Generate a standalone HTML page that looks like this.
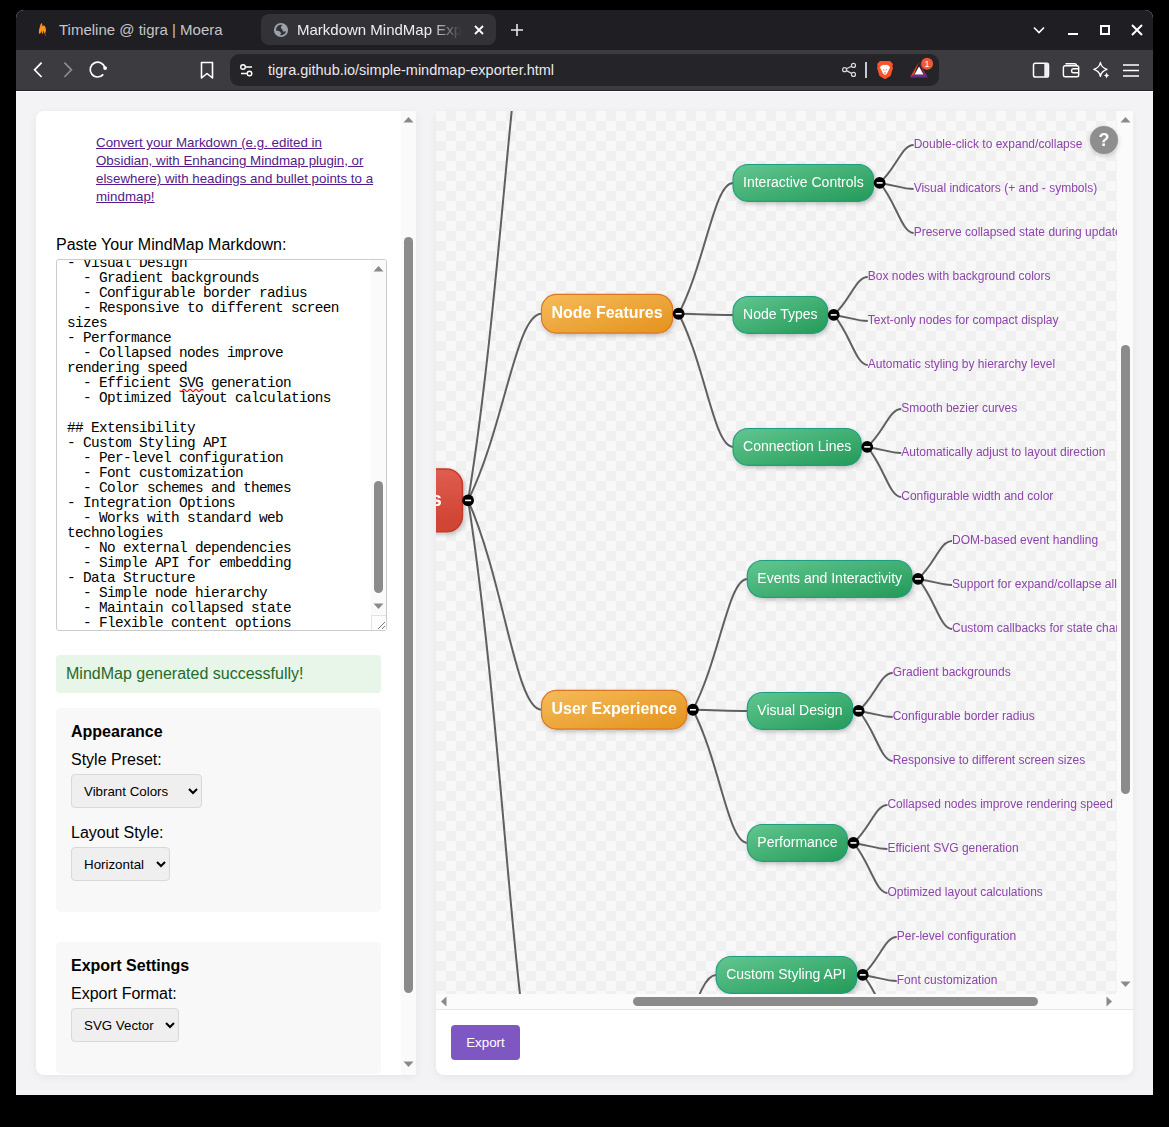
<!DOCTYPE html>
<html><head><meta charset="utf-8">
<style>
*{box-sizing:border-box;margin:0;padding:0}
html,body{width:1169px;height:1127px;overflow:hidden;background:#000;font-family:"Liberation Sans",sans-serif}
.a{position:absolute}
#win{position:absolute;left:16px;top:10px;width:1137px;height:1085px;background:#f3f3f5;border-radius:8px 8px 0 0;overflow:hidden}
#tabs{position:absolute;left:0;top:0;width:1137px;height:40px;background:#1f1e23}
#tool{position:absolute;left:0;top:40px;width:1137px;height:41px;background:#3c3b40;border-bottom:1px solid #252429}
#content{position:absolute;left:0;top:81px;width:1137px;height:1004px;background:#f3f3f5;border-top:1px solid #fff}
.sel{background:#efefef;border:1px solid #d9d9d9;border-radius:4px}
.sel span{position:absolute;left:12px;top:8px;font-size:13.33px;line-height:18px;color:#000}
.chev{position:absolute;top:13px}
.tabt{position:absolute;font-size:15px;white-space:nowrap;line-height:18px}
</style></head><body>
<div id="win">
  <div id="tabs">
    <!-- inactive tab favicon -->
    <svg class="a" style="left:21px;top:11px" width="12" height="16" viewBox="21 11 12 16">
      <path d="M22.9 23.2 C22.6 20.5 23.6 17.5 24.6 14.6 C24.9 13.4 25.6 12.8 26.1 13.5 C26.4 14.6 26.3 15.8 26.6 16.6 C27 15.6 27.6 15.1 28.3 15.6 C29.4 16.6 30.1 18.6 30 20.6 C29.8 22 29.3 23.4 28.8 24.2 C28.2 22.8 27.9 21.5 27.5 20.4 C27.2 21.8 27.1 23.2 26.6 24 C26 23.6 25.7 22.2 25.6 20.6 C25.2 21.8 24.8 23 24.2 23.6 C23.6 23.9 23.1 23.8 22.9 23.2 Z" fill="#f7931e"/>
      <circle cx="29.4" cy="25" r="0.7" fill="#8a5a2a"/>
    </svg>
    <div class="tabt" style="left:43px;top:11px;color:#c5c4c9">Timeline @ tigra | Moera</div>
    <!-- active tab -->
    <div class="a" style="left:245px;top:4px;width:235px;height:31px;background:#333237;border-radius:8px"></div>
    <svg class="a" style="left:257px;top:12px" width="16" height="16" viewBox="-8 -8 16 16">
      <circle cx="0" cy="0" r="7.1" fill="#9da1aa"/>
      <path d="M-5 0.6 A5.3 5.3 0 0 1 1.4 -5.1 C-0.2 -3.8 -0.6 -2.2 0.6 -1.2 C1.6 -0.3 2 0.6 1.6 1.2 C2.8 1.6 3.8 1.6 5.1 1.4 A5.3 5.3 0 0 1 -1.2 5.2 C0 4 0.3 3 -0.4 2.2 C-1.4 1.3 -3 0.8 -5 0.6 Z" fill="#333237"/>
    </svg>
    <div class="tabt" style="left:281px;top:11px;color:#eeedf2;width:165px;overflow:hidden;-webkit-mask-image:linear-gradient(90deg,#000 80%,transparent 100%)">Markdown MindMap Exporter</div>
    <svg class="a" style="left:457px;top:14px" width="12" height="12" viewBox="0 0 12 12"><path d="M2 2 L10 10 M10 2 L2 10" stroke="#fff" stroke-width="1.8"/></svg>
    <svg class="a" style="left:494px;top:13px" width="14" height="14" viewBox="0 0 14 14"><path d="M7 1 V13 M1 7 H13" stroke="#e8e7ec" stroke-width="1.6"/></svg>
    <!-- window controls -->
    <svg class="a" style="left:1017px;top:16px" width="12" height="8" viewBox="0 0 12 8"><path d="M1 1.5 L6 6.5 L11 1.5" stroke="#fff" stroke-width="1.6" fill="none"/></svg>
    <div class="a" style="left:1052px;top:22.5px;width:10px;height:2px;background:#fff"></div>
    <div class="a" style="left:1084px;top:15px;width:10px;height:10px;border:2px solid #fff"></div>
    <svg class="a" style="left:1115px;top:14px" width="12" height="12" viewBox="0 0 12 12"><path d="M1 1 L11 11 M11 1 L1 11" stroke="#fff" stroke-width="2"/></svg>
  </div>
  <div id="tool">
    <!-- back / fwd / reload -->
    <svg class="a" style="left:14px;top:10px" width="100" height="22" viewBox="30 60 100 22">
      <path d="M41.6 62.6 L34.6 69.8 L41.6 77" stroke="#fff" stroke-width="1.7" fill="none"/>
      <path d="M64.4 62.6 L71.4 69.8 L64.4 77" stroke="#8d8c91" stroke-width="1.7" fill="none"/>
      <path d="M104.84 68.06 A7.4 7.4 0 1 0 103.27 74.36" stroke="#fff" stroke-width="1.7" fill="none"/>
      <circle cx="105.14" cy="68.06" r="1.9" fill="#fff"/>
    </svg>
    <svg class="a" style="left:183px;top:11px" width="16" height="19" viewBox="0 0 16 19"><path d="M2.5 1.5 H13.5 V17 L8 12.5 L2.5 17 Z" stroke="#fff" stroke-width="1.6" fill="none" stroke-linejoin="round"/></svg>
    <!-- url bar -->
    <div class="a" style="left:214px;top:4px;width:709px;height:32px;background:#252429;border-radius:9px"></div>
    <svg class="a" style="left:223px;top:13px" width="16" height="15" viewBox="0 0 16 15">
      <circle cx="4" cy="4" r="2.3" stroke="#fff" stroke-width="1.4" fill="none"/><path d="M6.8 4 H13" stroke="#fff" stroke-width="1.4"/>
      <circle cx="10.5" cy="10.5" r="2.3" stroke="#fff" stroke-width="1.4" fill="none"/><path d="M2 10.5 H7.8" stroke="#fff" stroke-width="1.4"/>
    </svg>
    <div class="tabt" style="left:252px;top:11px;font-size:14.5px;color:#e9e8ed">tigra.github.io/simple-mindmap-exporter.html</div>
  </div>
  <div id="content"></div>
</div>


<!-- url bar right icons -->
<svg class="a" style="left:840px;top:61px" width="18" height="18" viewBox="840 61 18 18">
  <path d="M846.5 68.8 L851.6 66.2 M846.5 70.6 L851.6 73.4" stroke="#d8d7dc" stroke-width="1.2"/>
  <circle cx="844.6" cy="69.7" r="2" fill="none" stroke="#d8d7dc" stroke-width="1.2"/>
  <circle cx="853.5" cy="65.4" r="2" fill="none" stroke="#d8d7dc" stroke-width="1.2"/>
  <circle cx="853.5" cy="74.4" r="2" fill="none" stroke="#d8d7dc" stroke-width="1.2"/>
</svg>
<div class="a" style="left:865px;top:62px;width:1.5px;height:16px;background:#c9c8cd"></div>
<svg class="a" style="left:876px;top:60px" width="18" height="20" viewBox="876 60 18 20">
  <path d="M880 61 L890 61 L893 64 L892.3 66 L893 68 L890.5 76 L885 79.2 L879.5 76 L877 68 L877.7 66 L877 64 Z" fill="#fb542b"/>
  <path d="M881.5 65.5 L883.8 64.8 L885 65.3 L886.2 64.8 L888.5 65.5 L890 67 L889.2 69.3 L888 71.5 L886.8 73.8 L885 75 L883.2 73.8 L882 71.5 L880.8 69.3 L880 67 Z" fill="#fff"/>
  <path d="M883 69.5 L884.3 70.2 M887 69.5 L885.7 70.2 M884 73.3 L885 72.6 L886 73.3" stroke="#fb542b" stroke-width="0.9" fill="none"/>
</svg>
<svg class="a" style="left:908px;top:56px" width="28" height="24" viewBox="908 56 28 24">
  <path d="M919 62 L910 77.4 L914 74.5 Z" fill="#ff4724"/>
  <path d="M919 62 L928 77.4 L924 74.5 Z" fill="#9e1f63"/>
  <path d="M910 77.4 L928 77.4 L924 74.5 L914 74.5 Z" fill="#662d91"/>
  <path d="M919 66.5 L914.5 74.5 L923.5 74.5 Z" fill="#fff"/>
  <path d="M919 62 L914 74.5 L924 74.5 Z" fill="none"/>
  <circle cx="927.1" cy="63.7" r="6" fill="#f0582e"/>
  <text x="927.1" y="67" text-anchor="middle" font-size="9" fill="#fff" font-family="Liberation Sans">1</text>
</svg>
<!-- toolbar right icons -->
<svg class="a" style="left:1030px;top:60px" width="116" height="20" viewBox="1030 60 116 20">
  <rect x="1033.5" y="63.2" width="15" height="13.8" rx="1.8" fill="none" stroke="#fff" stroke-width="1.5"/>
  <rect x="1044.3" y="63.2" width="4.2" height="13.8" fill="#f0f0f3"/>
  <path d="M1065.5 63.7 H1074.5 Q1076.5 63.7 1076.5 65.7 V66.3" fill="none" stroke="#fff" stroke-width="1.4"/>
  <rect x="1063.4" y="65.8" width="15.3" height="11" rx="1.8" fill="none" stroke="#fff" stroke-width="1.4"/>
  <path d="M1078.7 68.8 H1073.3 Q1071.6 68.8 1071.6 70.6 V71 Q1071.6 72.8 1073.3 72.8 H1078.7" fill="none" stroke="#fff" stroke-width="1.4"/>
  <path d="M1100.4 62.5 Q1101.3 67.6 1107 69.3 Q1101.3 71 1100.4 76.3 Q1099.5 71 1093.8 69.3 Q1099.5 67.6 1100.4 62.5 Z" fill="none" stroke="#fff" stroke-width="1.4" stroke-linejoin="round"/>
  <path d="M1106.6 72.6 Q1107 75 1109.2 75.5 Q1107 76 1106.6 78.4 Q1106.2 76 1104 75.5 Q1106.2 75 1106.6 72.6 Z" fill="#fff"/>
  <path d="M1123 65 H1139 M1123 70.4 H1139 M1123 76 H1139" stroke="#fff" stroke-width="1.5"/>
</svg>
<!-- LEFT PANEL -->
<div class="a" style="left:36px;top:111px;width:380px;height:964px;background:#fff;border-radius:8px 0 0 8px;box-shadow:0 2px 8px rgba(0,0,0,0.06);overflow:hidden">
</div>
<div class="a" style="left:401px;top:111px;width:15px;height:964px;background:#fafafa"></div>
<svg class="a" style="left:403px;top:116px" width="11" height="7" viewBox="0 0 11 7"><path d="M0.5 6.5 L5.5 1 L10.5 6.5Z" fill="#8a8a8a"/></svg>
<svg class="a" style="left:403px;top:1061px" width="11" height="7" viewBox="0 0 11 7"><path d="M0.5 0.5 L5.5 6 L10.5 0.5Z" fill="#8a8a8a"/></svg>
<div class="a" style="left:404px;top:237px;width:9px;height:756px;background:#8b8b8b;border-radius:5px"></div>

<div class="a" style="left:96px;top:134px;width:300px;font-size:13.33px;line-height:18px;color:#551a8b;text-decoration:underline">Convert your Markdown (e.g. edited in<br>Obsidian, with Enhancing Mindmap plugin, or<br>elsewhere) with headings and bullet points to a<br>mindmap!</div>
<div class="a" style="left:56px;top:236px;font-size:16px;line-height:18px;color:#000">Paste Your MindMap Markdown:</div>

<!-- textarea -->
<div class="a" style="left:56px;top:259px;width:331px;height:372px;border:1px solid #cbcbcb;border-radius:3px;background:#fff;overflow:hidden"><div class="a" style="left:314px;top:0;width:15px;height:370px;background:#fafafa"></div>
<pre class="a" style="left:10px;top:-4px;font-family:'Liberation Mono',monospace;font-size:14.4px;letter-spacing:-0.64px;line-height:15px;color:#000">- Visual Design
  - Gradient backgrounds
  - Configurable border radius
  - Responsive to different screen
sizes
- Performance
  - Collapsed nodes improve
rendering speed
  - Efficient SVG generation
  - Optimized layout calculations

## Extensibility
- Custom Styling API
  - Per-level configuration
  - Font customization
  - Color schemes and themes
- Integration Options
  - Works with standard web
technologies
  - No external dependencies
  - Simple API for embedding
- Data Structure
  - Simple node hierarchy
  - Maintain collapsed state
  - Flexible content options</pre>
</div>
<svg class="a" style="left:0;top:0" width="1169" height="1127" viewBox="0 0 1169 1127"><path d="M179.5 390.5 Q181.0 392.6 182.5 390.5 Q184.0 388.4 185.5 390.5 Q187.0 392.6 188.5 390.5 Q190.0 388.4 191.5 390.5 Q193.0 392.6 194.5 390.5 Q196.0 388.4 197.5 390.5 Q199.0 392.6 200.5 390.5 Q202.0 388.4 203.5 390.5" stroke="#f00" stroke-width="1.2" fill="none"/></svg>
<svg class="a" style="left:373px;top:265px" width="11" height="7" viewBox="0 0 11 7"><path d="M0.5 6.5 L5.5 1 L10.5 6.5Z" fill="#8a8a8a"/></svg>
<svg class="a" style="left:373px;top:603px" width="11" height="7" viewBox="0 0 11 7"><path d="M0.5 0.5 L5.5 6 L10.5 0.5Z" fill="#8a8a8a"/></svg>
<div class="a" style="left:374px;top:481px;width:9px;height:112px;background:#8b8b8b;border-radius:5px"></div>
<div class="a" style="left:371px;top:615px;width:15px;height:15px;border-left:1px solid #e2e2e2;border-top:1px solid #e2e2e2;background:#fdfdfd"></div><svg class="a" style="left:376px;top:620px" width="10" height="10" viewBox="0 0 10 10"><path d="M9 2 L2 9 M9 6 L6 9" stroke="#777" stroke-width="1"/></svg>

<!-- success -->
<div class="a" style="left:56px;top:655px;width:325px;height:38px;background:#e8f5e9;border-radius:4px"></div>
<div class="a" style="left:66px;top:665px;font-size:16px;line-height:18px;color:#256b29">MindMap generated successfully!</div>

<!-- appearance -->
<div class="a" style="left:56px;top:708px;width:325px;height:204px;background:#f8f8f8;border-radius:5px"></div>
<div class="a" style="left:71px;top:723px;font-size:16px;line-height:18px;font-weight:bold;color:#000">Appearance</div>
<div class="a" style="left:71px;top:751px;font-size:16px;line-height:18px;color:#000">Style Preset:</div>
<div class="a sel" style="left:71px;top:774px;width:131px;height:34px"><span>Vibrant Colors</span><svg class="chev" style="left:116px" width="10" height="7" viewBox="0 0 10 7"><path d="M1 1 L5 5 L9 1" stroke="#000" stroke-width="2" fill="none"/></svg></div>
<div class="a" style="left:71px;top:824px;font-size:16px;line-height:18px;color:#000">Layout Style:</div>
<div class="a sel" style="left:71px;top:847px;width:99px;height:34px"><span>Horizontal</span><svg class="chev" style="left:84px" width="10" height="7" viewBox="0 0 10 7"><path d="M1 1 L5 5 L9 1" stroke="#000" stroke-width="2" fill="none"/></svg></div>

<!-- export settings -->
<div class="a" style="left:56px;top:942px;width:325px;height:132px;background:#f8f8f8;border-radius:5px"></div>
<div class="a" style="left:71px;top:957px;font-size:16px;line-height:18px;font-weight:bold;color:#000">Export Settings</div>
<div class="a" style="left:71px;top:985px;font-size:16px;line-height:18px;color:#000">Export Format:</div>
<div class="a sel" style="left:71px;top:1008px;width:108px;height:34px"><span>SVG Vector</span><svg class="chev" style="left:93px" width="10" height="7" viewBox="0 0 10 7"><path d="M1 1 L5 5 L9 1" stroke="#000" stroke-width="2" fill="none"/></svg></div>

<!-- RIGHT PANEL -->
<div class="a" style="left:436px;top:111px;width:697px;height:964px;background:#fff;border-radius:8px;box-shadow:0 2px 8px rgba(0,0,0,0.06)"></div>
<!--MAP--><svg class="a" style="left:436px;top:111px;will-change:transform" width="681" height="883" viewBox="436 111 681 883">
<defs>
<linearGradient id="gr" x1="0" y1="0" x2="0.3" y2="1"><stop offset="0" stop-color="#e4665a"/><stop offset="1" stop-color="#d14535"/></linearGradient>
<linearGradient id="go" x1="0" y1="0" x2="1" y2="1"><stop offset="0" stop-color="#f6bb5a"/><stop offset="1" stop-color="#e3931d"/></linearGradient>
<linearGradient id="gg" x1="0" y1="0" x2="1" y2="1"><stop offset="0" stop-color="#62c690"/><stop offset="1" stop-color="#239a58"/></linearGradient>
<filter id="sh" x="-20%" y="-30%" width="140%" height="170%"><feDropShadow dx="1.5" dy="2" stdDeviation="2" flood-color="#000" flood-opacity="0.22"/></filter>
<pattern id="chk" x="436" y="111" width="20" height="20" patternUnits="userSpaceOnUse"><rect width="20" height="20" fill="#f8f8f8"/><rect x="10" width="10" height="10" fill="#f0f0f0"/><rect y="10" width="10" height="10" fill="#f0f0f0"/></pattern>
</defs>
<rect x="436" y="111" width="681" height="883" fill="url(#chk)"/>
<g fill="none" stroke="#606060" stroke-width="2"><path d="M468.10 500.40C504.80 277.84 515.81 -56.00 541.50 -56.00"/><path d="M468.10 500.40C504.80 425.74 515.81 313.75 541.50 313.75"/><path d="M678.64 313.75C705.84 261.41 714.00 182.90 733.04 182.90"/><path d="M879.65 182.90C896.65 167.70 901.75 144.90 913.65 144.90"/><path d="M879.65 182.90C896.65 185.30 901.75 188.90 913.65 188.90"/><path d="M879.65 182.90C896.65 202.90 901.75 232.90 913.65 232.90"/><path d="M678.64 313.75C705.84 314.21 714.00 314.90 733.04 314.90"/><path d="M833.75 314.90C850.75 299.70 855.85 276.90 867.75 276.90"/><path d="M833.75 314.90C850.75 317.30 855.85 320.90 867.75 320.90"/><path d="M833.75 314.90C850.75 334.90 855.85 364.90 867.75 364.90"/><path d="M678.64 313.75C705.84 367.01 714.00 446.90 733.04 446.90"/><path d="M867.23 446.90C884.23 431.70 889.33 408.90 901.23 408.90"/><path d="M867.23 446.90C884.23 449.30 889.33 452.90 901.23 452.90"/><path d="M867.23 446.90C884.23 466.90 889.33 496.90 901.23 496.90"/><path d="M468.10 500.40C504.80 584.14 515.81 709.75 541.50 709.75"/><path d="M692.91 709.75C720.11 657.41 728.27 578.90 747.31 578.90"/><path d="M918.04 578.90C935.04 563.70 940.14 540.90 952.04 540.90"/><path d="M918.04 578.90C935.04 581.30 940.14 584.90 952.04 584.90"/><path d="M918.04 578.90C935.04 598.90 940.14 628.90 952.04 628.90"/><path d="M692.91 709.75C720.11 710.21 728.27 710.90 747.31 710.90"/><path d="M858.65 710.90C875.65 695.70 880.75 672.90 892.65 672.90"/><path d="M858.65 710.90C875.65 713.30 880.75 716.90 892.65 716.90"/><path d="M858.65 710.90C875.65 730.90 880.75 760.90 892.65 760.90"/><path d="M692.91 709.75C720.11 763.01 728.27 842.90 747.31 842.90"/><path d="M853.45 842.90C870.45 827.70 875.55 804.90 887.45 804.90"/><path d="M853.45 842.90C870.45 845.30 875.55 848.90 887.45 848.90"/><path d="M853.45 842.90C870.45 862.90 875.55 892.90 887.45 892.90"/><path d="M468.10 500.40C504.80 735.44 515.81 1088.00 541.50 1088.00"/><path d="M661.75 1088.00C688.95 1042.76 697.11 974.90 716.15 974.90"/><path d="M862.75 974.90C879.75 959.70 884.85 936.90 896.75 936.90"/><path d="M862.75 974.90C879.75 977.30 884.85 980.90 896.75 980.90"/><path d="M862.75 974.90C879.75 994.90 884.85 1024.90 896.75 1024.90"/></g>
<rect x="200" y="469.00" width="262.50" height="62.8" rx="16" fill="url(#gr)" stroke="#c23a2c" stroke-width="1.5" filter="url(#sh)"/>
<text x="442" y="505.60" text-anchor="end" font-size="20" font-weight="bold" fill="#fff">Simple MindMap Features</text>
<rect x="541.50" y="294.45" width="131.14" height="38.6" rx="15" fill="url(#go)" stroke="#dc7420" stroke-width="1.2" filter="url(#sh)"/>
<text x="551.50" y="317.90" font-size="16" font-weight="bold" fill="#fff">Node Features</text>
<rect x="733.04" y="164.50" width="140.61" height="36.8" rx="15" fill="url(#gg)" stroke="#1f9f80" stroke-width="1.2" filter="url(#sh)"/>
<text x="743.04" y="186.53" font-size="14" fill="#fff">Interactive Controls</text>
<rect x="733.04" y="296.50" width="94.71" height="36.8" rx="15" fill="url(#gg)" stroke="#1f9f80" stroke-width="1.2" filter="url(#sh)"/>
<text x="743.04" y="318.53" font-size="14" fill="#fff">Node Types</text>
<rect x="733.04" y="428.50" width="128.19" height="36.8" rx="15" fill="url(#gg)" stroke="#1f9f80" stroke-width="1.2" filter="url(#sh)"/>
<text x="743.04" y="450.53" font-size="14" fill="#fff">Connection Lines</text>
<rect x="541.50" y="690.45" width="145.41" height="38.6" rx="15" fill="url(#go)" stroke="#dc7420" stroke-width="1.2" filter="url(#sh)"/>
<text x="551.50" y="713.90" font-size="16" font-weight="bold" fill="#fff">User Experience</text>
<rect x="747.31" y="560.50" width="164.74" height="36.8" rx="15" fill="url(#gg)" stroke="#1f9f80" stroke-width="1.2" filter="url(#sh)"/>
<text x="757.31" y="582.53" font-size="14" fill="#fff">Events and Interactivity</text>
<rect x="747.31" y="692.50" width="105.35" height="36.8" rx="15" fill="url(#gg)" stroke="#1f9f80" stroke-width="1.2" filter="url(#sh)"/>
<text x="757.31" y="714.53" font-size="14" fill="#fff">Visual Design</text>
<rect x="747.31" y="824.50" width="100.14" height="36.8" rx="15" fill="url(#gg)" stroke="#1f9f80" stroke-width="1.2" filter="url(#sh)"/>
<text x="757.31" y="846.53" font-size="14" fill="#fff">Performance</text>
<rect x="541.50" y="1068.70" width="114.25" height="38.6" rx="15" fill="url(#go)" stroke="#dc7420" stroke-width="1.2" filter="url(#sh)"/>
<text x="551.50" y="1092.15" font-size="16" font-weight="bold" fill="#fff">Extensibility</text>
<rect x="716.15" y="956.50" width="140.60" height="36.8" rx="15" fill="url(#gg)" stroke="#1f9f80" stroke-width="1.2" filter="url(#sh)"/>
<text x="726.15" y="978.53" font-size="14" fill="#fff">Custom Styling API</text>
<text x="913.65" y="148.00" font-size="12" fill="#8e44ad">Double-click to expand/collapse</text>
<text x="913.65" y="192.00" font-size="12" fill="#8e44ad">Visual indicators (+ and - symbols)</text>
<text x="913.65" y="236.00" font-size="12" fill="#8e44ad">Preserve collapsed state during updates</text>
<text x="867.75" y="280.00" font-size="12" fill="#8e44ad">Box nodes with background colors</text>
<text x="867.75" y="324.00" font-size="12" fill="#8e44ad">Text-only nodes for compact display</text>
<text x="867.75" y="368.00" font-size="12" fill="#8e44ad">Automatic styling by hierarchy level</text>
<text x="901.23" y="412.00" font-size="12" fill="#8e44ad">Smooth bezier curves</text>
<text x="901.23" y="456.00" font-size="12" fill="#8e44ad">Automatically adjust to layout direction</text>
<text x="901.23" y="500.00" font-size="12" fill="#8e44ad">Configurable width and color</text>
<text x="952.04" y="544.00" font-size="12" fill="#8e44ad">DOM-based event handling</text>
<text x="952.04" y="588.00" font-size="12" fill="#8e44ad">Support for expand/collapse all</text>
<text x="952.04" y="632.00" font-size="12" fill="#8e44ad">Custom callbacks for state changes</text>
<text x="892.65" y="676.00" font-size="12" fill="#8e44ad">Gradient backgrounds</text>
<text x="892.65" y="720.00" font-size="12" fill="#8e44ad">Configurable border radius</text>
<text x="892.65" y="764.00" font-size="12" fill="#8e44ad">Responsive to different screen sizes</text>
<text x="887.45" y="808.00" font-size="12" fill="#8e44ad">Collapsed nodes improve rendering speed</text>
<text x="887.45" y="852.00" font-size="12" fill="#8e44ad">Efficient SVG generation</text>
<text x="887.45" y="896.00" font-size="12" fill="#8e44ad">Optimized layout calculations</text>
<text x="896.75" y="940.00" font-size="12" fill="#8e44ad">Per-level configuration</text>
<text x="896.75" y="984.00" font-size="12" fill="#8e44ad">Font customization</text>
<text x="896.75" y="1028.00" font-size="12" fill="#8e44ad">Color schemes and themes</text>
<circle cx="468.10" cy="500.40" r="5.9" fill="#000"/><rect x="465.10" y="499.60" width="6" height="1.6" fill="#fff"/>
<circle cx="678.64" cy="313.75" r="5.9" fill="#000"/><rect x="675.64" y="312.95" width="6" height="1.6" fill="#fff"/>
<circle cx="879.65" cy="182.90" r="5.9" fill="#000"/><rect x="876.65" y="182.10" width="6" height="1.6" fill="#fff"/>
<circle cx="833.75" cy="314.90" r="5.9" fill="#000"/><rect x="830.75" y="314.10" width="6" height="1.6" fill="#fff"/>
<circle cx="867.23" cy="446.90" r="5.9" fill="#000"/><rect x="864.23" y="446.10" width="6" height="1.6" fill="#fff"/>
<circle cx="692.91" cy="709.75" r="5.9" fill="#000"/><rect x="689.91" y="708.95" width="6" height="1.6" fill="#fff"/>
<circle cx="918.04" cy="578.90" r="5.9" fill="#000"/><rect x="915.04" y="578.10" width="6" height="1.6" fill="#fff"/>
<circle cx="858.65" cy="710.90" r="5.9" fill="#000"/><rect x="855.65" y="710.10" width="6" height="1.6" fill="#fff"/>
<circle cx="853.45" cy="842.90" r="5.9" fill="#000"/><rect x="850.45" y="842.10" width="6" height="1.6" fill="#fff"/>
<circle cx="661.75" cy="1088.00" r="5.9" fill="#000"/><rect x="658.75" y="1087.20" width="6" height="1.6" fill="#fff"/>
<circle cx="862.75" cy="974.90" r="5.9" fill="#000"/><rect x="859.75" y="974.10" width="6" height="1.6" fill="#fff"/>
</svg><!--/MAP-->
<div class="a" style="left:1117px;top:111px;width:16px;height:898px;background:#fbfbfb"></div>
<div class="a" style="left:436px;top:994px;width:681px;height:15px;background:#fbfbfb"></div>
<div class="a" style="left:436px;top:1009px;width:697px;height:1px;background:#e6e6e6"></div>
<svg class="a" style="left:1120px;top:116px" width="11" height="7" viewBox="0 0 11 7"><path d="M0.5 6.5 L5.5 1 L10.5 6.5Z" fill="#8a8a8a"/></svg>
<svg class="a" style="left:1120px;top:981px" width="11" height="7" viewBox="0 0 11 7"><path d="M0.5 0.5 L5.5 6 L10.5 0.5Z" fill="#8a8a8a"/></svg>
<div class="a" style="left:1121px;top:345px;width:9px;height:449px;background:#8b8b8b;border-radius:5px"></div>
<svg class="a" style="left:440px;top:996px" width="7" height="11" viewBox="0 0 7 11"><path d="M6.5 0.5 L1 5.5 L6.5 10.5Z" fill="#8a8a8a"/></svg>
<svg class="a" style="left:1106px;top:996px" width="7" height="11" viewBox="0 0 7 11"><path d="M0.5 0.5 L6 5.5 L0.5 10.5Z" fill="#8a8a8a"/></svg>
<div class="a" style="left:633px;top:997px;width:405px;height:9px;background:#8b8b8b;border-radius:5px"></div>
<div class="a" style="left:1090px;top:126px;width:28px;height:28px;border-radius:50%;background:#8e8e8e;box-shadow:0 2px 5px rgba(0,0,0,0.2);color:#fff;font-weight:bold;font-size:18px;line-height:28px;text-align:center">?</div>
<div class="a" style="left:451px;top:1025px;width:69px;height:35px;background:#7e57c2;border-radius:4px;color:#fff;font-size:13.33px;line-height:35px;text-align:center">Export</div>
</body></html>
